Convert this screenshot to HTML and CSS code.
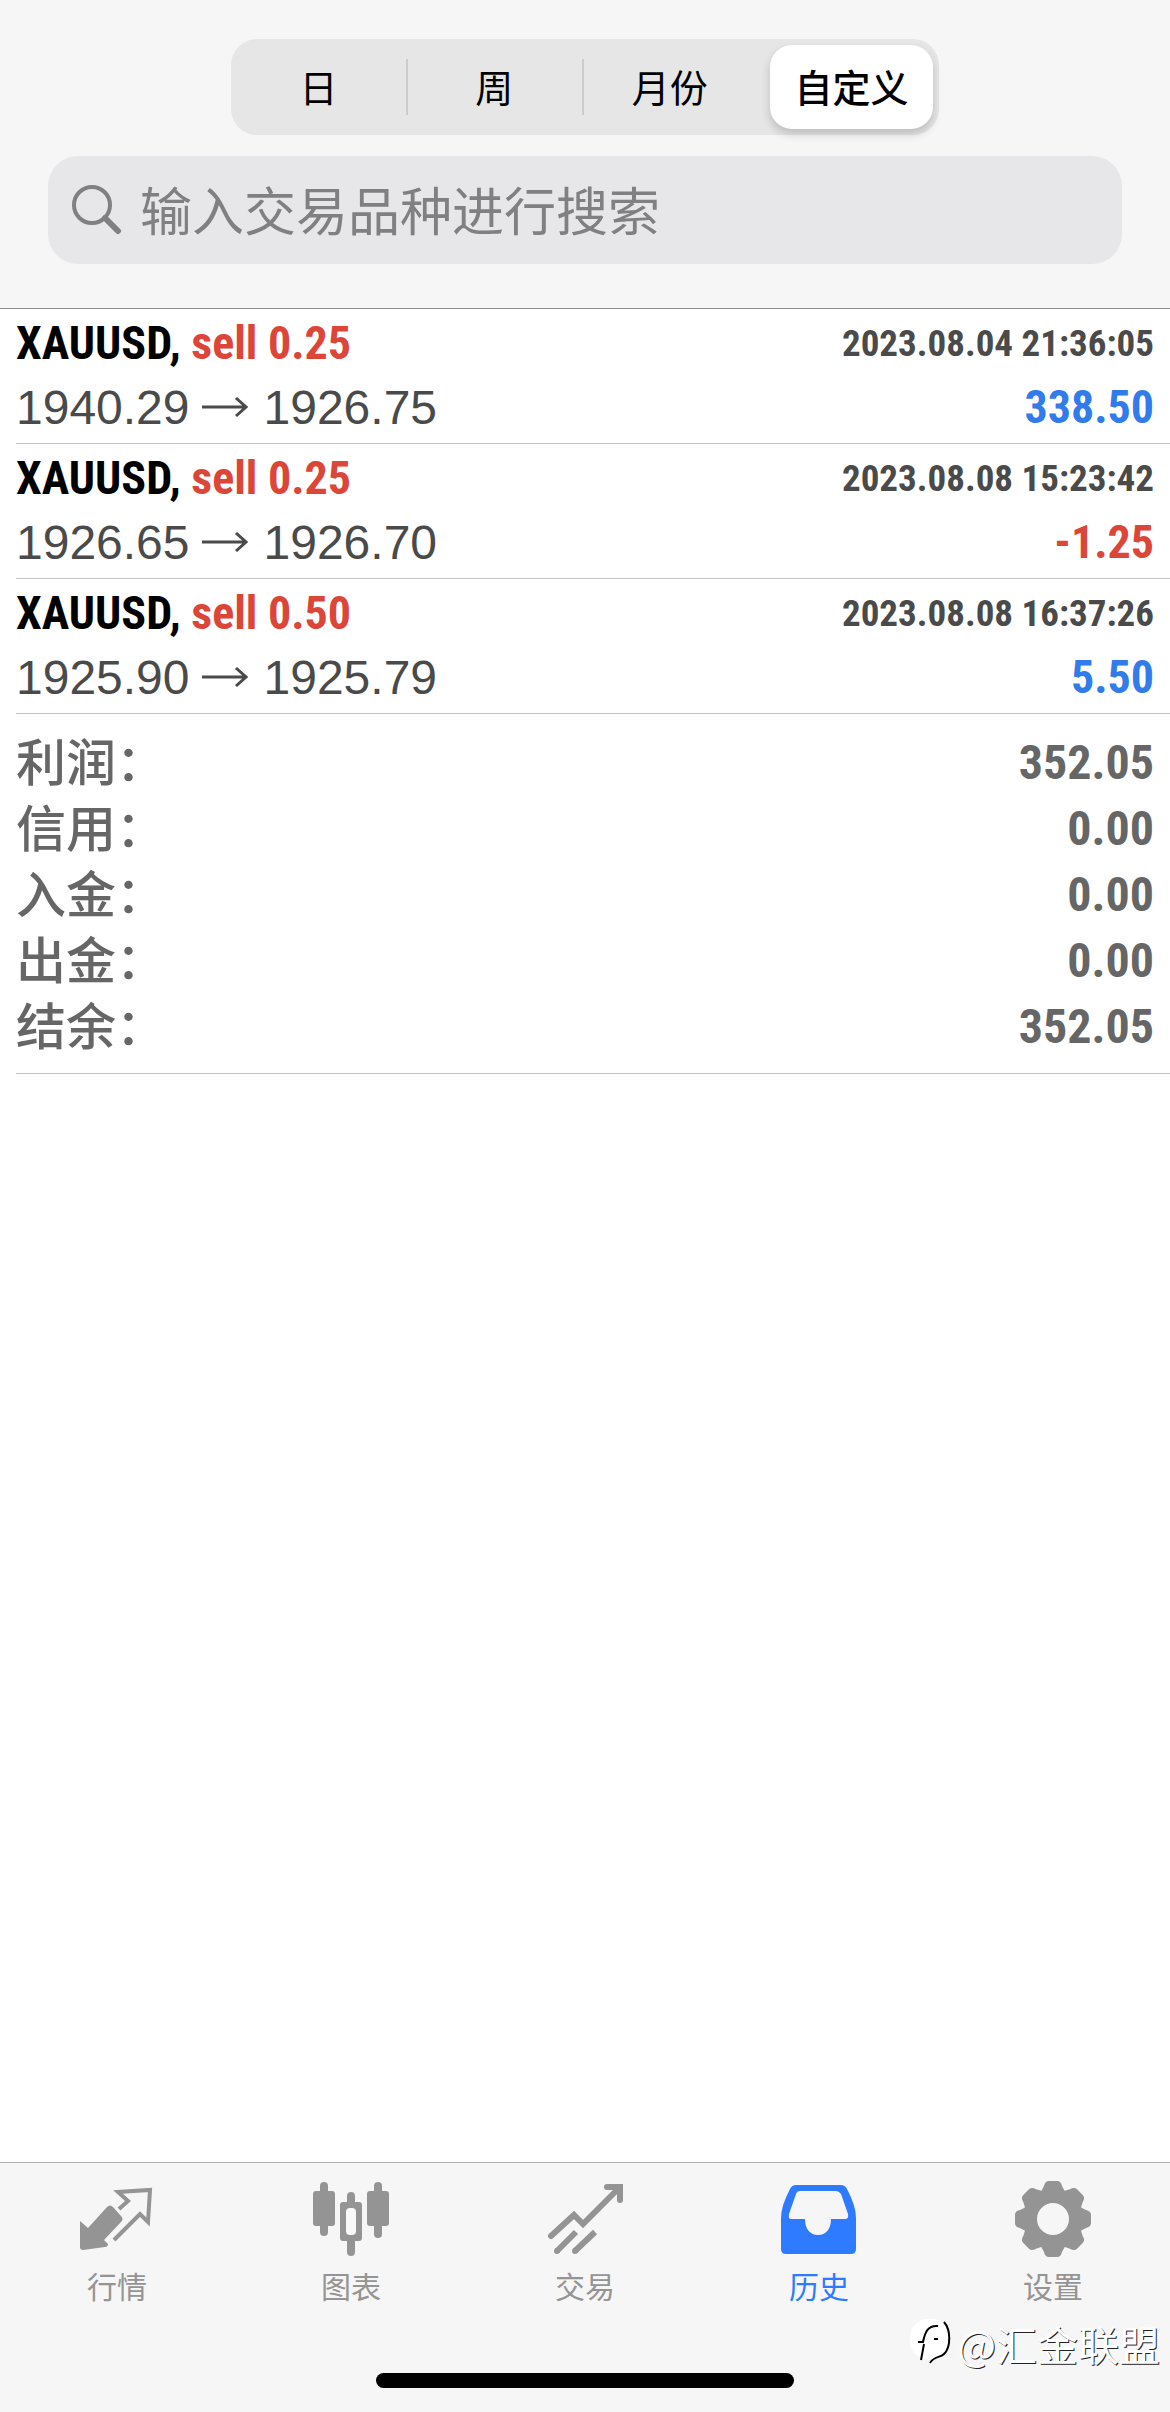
FILE: index.html
```html
<!DOCTYPE html>
<html lang="zh-CN">
<head>
<meta charset="utf-8">
<meta name="viewport" content="width=device-width, initial-scale=1">
<title>历史</title>
<link rel="stylesheet" href="styles.css">
</head>
<body>
<header class="header">
  <div class="segments" role="group" aria-label="时间范围">
    <button type="button" class="segment">日</button>
    <button type="button" class="segment segment-divided">周</button>
    <button type="button" class="segment segment-divided">月份</button>
    <button type="button" class="segment segment-active" aria-pressed="true">自定义</button>
  </div>
  <label class="search">
    <svg class="search-icon" viewBox="0 0 50 50" aria-hidden="true"><circle cx="20" cy="20" r="18"/><path d="M33 33L46 46" stroke-width="6"/></svg>
    <input class="search-input" type="search" placeholder="输入交易品种进行搜索" aria-label="输入交易品种进行搜索">
  </label>
</header>

<main class="history">
  <ul class="deals">
    <li class="deal">
      <div class="deal-line">
        <span class="symbol">XAUUSD, <span class="side">sell 0.25</span></span>
        <time class="time">2023.08.04 21:36:05</time>
      </div>
      <div class="deal-line">
        <span class="prices">1940.29<svg class="arrow" viewBox="0 0 46 22" role="img" aria-label="至"><path d="M0 11H44M34 2L44 11L34 20"/></svg>1926.75</span>
        <span class="amount profit">338.50</span>
      </div>
    </li>
    <li class="deal">
      <div class="deal-line">
        <span class="symbol">XAUUSD, <span class="side">sell 0.25</span></span>
        <time class="time">2023.08.08 15:23:42</time>
      </div>
      <div class="deal-line">
        <span class="prices">1926.65<svg class="arrow" viewBox="0 0 46 22" role="img" aria-label="至"><path d="M0 11H44M34 2L44 11L34 20"/></svg>1926.70</span>
        <span class="amount loss">-1.25</span>
      </div>
    </li>
    <li class="deal">
      <div class="deal-line">
        <span class="symbol">XAUUSD, <span class="side">sell 0.50</span></span>
        <time class="time">2023.08.08 16:37:26</time>
      </div>
      <div class="deal-line">
        <span class="prices">1925.90<svg class="arrow" viewBox="0 0 46 22" role="img" aria-label="至"><path d="M0 11H44M34 2L44 11L34 20"/></svg>1925.79</span>
        <span class="amount profit">5.50</span>
      </div>
    </li>
  </ul>
  <dl class="summary">
    <div class="total"><dt>利润：</dt><dd>352.05</dd></div>
    <div class="total"><dt>信用：</dt><dd>0.00</dd></div>
    <div class="total"><dt>入金：</dt><dd>0.00</dd></div>
    <div class="total"><dt>出金：</dt><dd>0.00</dd></div>
    <div class="total"><dt>结余：</dt><dd>352.05</dd></div>
  </dl>
</main>

<footer class="footer">
  <nav class="tabs" aria-label="主导航">
    <a class="tab" href="#quotes">
      <svg class="tab-icon" viewBox="0 0 76 76" aria-hidden="true"><path fill="currentColor" d="M1 40L9 47L28 26Q31 23 34 26L42 35Q45 38 42 41L25 59L29 63Q29 66 26 66L4 69Q1 69 1 66Z"/><path fill="none" stroke="currentColor" stroke-width="4" stroke-linejoin="miter" d="M40 28L49 20L39 11L71 9L69 41L61 33L35 59"/></svg>
      <span>行情</span>
    </a>
    <a class="tab" href="#charts">
      <svg class="tab-icon" viewBox="0 0 76 76" fill="currentColor" aria-hidden="true"><rect x="0" y="10" width="22" height="35" rx="3"/><rect x="7" y="1" width="8" height="54" rx="4"/><rect x="54" y="10" width="22" height="35" rx="3"/><rect x="61" y="1" width="8" height="56" rx="4"/><rect x="34" y="11" width="8" height="64" rx="4"/><rect x="27" y="21" width="22" height="39" rx="3"/><rect x="33" y="27" width="10" height="27" rx="4" fill="#f9f9f9"/></svg>
      <span>图表</span>
    </a>
    <a class="tab" href="#trade">
      <svg class="tab-icon" viewBox="0 0 76 76" fill="none" stroke="currentColor" stroke-width="6" stroke-linecap="round" aria-hidden="true"><path d="M4 55L27 34L36 43L71 8M60 6H73V19"/><path stroke-linecap="butt" d="M29 51L10 70M48 51L28 70"/><path d="M10 70h0M28 70h0"/></svg>
      <span>交易</span>
    </a>
    <a class="tab tab-active" href="#history" aria-current="page">
      <svg class="tab-icon" viewBox="0 -1 76 76" aria-hidden="true"><path fill="currentColor" fill-rule="evenodd" d="M15 3H60Q64 3 66 7Q75 24 75 36V67Q75 72 70 72H5Q0 72 0 67V36Q0 24 9 7Q11 3 15 3ZM19 9Q16 9 15 12L8 32Q7 37 10 37H24C24 47 29 53 37 53S50 47 50 37H64Q68 37 67 32L60 12Q58 9 55 9Z"/></svg>
      <span>历史</span>
    </a>
    <a class="tab" href="#settings">
      <svg class="tab-icon" viewBox="-38 -38 76 76" fill="currentColor" aria-hidden="true"><defs><path id="tooth" d="M-15 -24Q-11 -28 -9 -33Q-8 -38 -4 -38H4Q8 -38 9 -33Q11 -28 15 -24L0 -16Z"/></defs><circle r="23" fill="none" stroke="currentColor" stroke-width="14"/><use href="#tooth"/><use href="#tooth" transform="rotate(45)"/><use href="#tooth" transform="rotate(90)"/><use href="#tooth" transform="rotate(135)"/><use href="#tooth" transform="rotate(180)"/><use href="#tooth" transform="rotate(225)"/><use href="#tooth" transform="rotate(270)"/><use href="#tooth" transform="rotate(315)"/></svg>
      <span>设置</span>
    </a>
  </nav>
  <div class="home-indicator"></div>
  <div class="watermark">
    <svg class="watermark-logo" viewBox="0 0 44 50" aria-hidden="true"><rect x="1" y="1" width="40" height="40" rx="18" fill="#fff"/><path d="M12 42L15 26M9 24H14C16 14 19 7 29 8M25 21H29M35 4C42 12 42 29 35 36C31 40 25 38 21 45" fill="none" stroke="#000" stroke-width="2"/></svg>
    <span>@汇金联盟</span>
  </div>
</footer>
</body>
</html>
```
FILE: styles.css
```css
* { box-sizing: border-box; }

body {
  margin: 0;
  min-height: 100vh;
  display: flex;
  flex-direction: column;
  background: #fff;
  color: #4a4a4a;
  font-family: "Liberation Sans", "Noto Sans CJK SC", sans-serif;
}

.header {
  display: flex;
  flex-direction: column;
  align-items: center;
  gap: 21px;
  padding: 39px 48px 44px;
  background: #f6f6f6;
  border-bottom: 1px solid #8a8a8a;
}

.segments {
  display: grid;
  grid-template-columns: repeat(4, 1fr);
  width: 66%;
  height: 96px;
  padding: 6px 6px 6px 0;
  border-radius: 26px;
  background: #e6e6e6;
}

.segment {
  display: flex;
  align-items: center;
  justify-content: center;
  margin: 0;
  padding: 0 0 4px;
  border: 0;
  border-radius: 22px;
  background: transparent;
  color: #000;
  font: 400 38px "Noto Sans CJK SC", sans-serif;
}

.segment-divided {
  border-radius: 0;
  background: linear-gradient(#cdcdcd, #cdcdcd) left center / 2px 56px no-repeat;
}

.segment-active {
  margin-left: 12px;
  background: #fff;
  font-weight: 500;
  box-shadow: 0 5px 10px rgba(0, 0, 0, 0.18);
}

.search {
  display: flex;
  align-items: center;
  gap: 18px;
  width: 100%;
  height: 108px;
  padding: 0 24px;
  border-radius: 30px;
  background: #e7e7e9;
}

.search-icon {
  flex: none;
  width: 50px;
  height: 50px;
  fill: none;
  stroke: #808082;
  stroke-width: 4;
  stroke-linecap: round;
}

.search-input {
  flex: 1;
  min-width: 0;
  padding: 0 0 4px;
  border: 0;
  outline: 0;
  background: transparent;
  color: #000;
  font: 400 52px "Noto Sans CJK SC", sans-serif;
}

.search-input::placeholder { color: #808082; opacity: 1; }

.history { flex: 1; padding-left: 16px; }

.deals { margin: 0; padding: 0; list-style: none; }

.deal {
  height: 135px;
  padding: 2px 16px 0 0;
  border-bottom: 1px solid #c4c4c4;
}

.deal-line {
  display: flex;
  align-items: center;
  justify-content: space-between;
  height: 64px;
}

.symbol, .time, .amount, .total dd {
  font-family: "Roboto Condensed", "Liberation Sans Narrow", sans-serif;
  font-weight: 700;
}

.symbol, .amount { font-size: 46px; }
.symbol { color: #000; }
.side, .loss { color: #dc4638; }
.time { font-size: 37px; }
.prices { display: flex; align-items: center; font-size: 48px; }
.arrow { width: 46px; height: 22px; margin: 0 16px 0 12px; fill: none; stroke: #4a4a4a; stroke-width: 3; }
.profit { color: #327bea; }

.summary {
  margin: 0;
  padding: 15px 16px 14px 0;
  border-bottom: 1px solid #c4c4c4;
  color: #666;
}

.total { display: flex; justify-content: space-between; height: 66px; }
.total dt { font: 500 50px/60px "Noto Sans CJK SC", sans-serif; }
.total dd { margin: 0; font-size: 48px; line-height: 68px; }

.footer {
  position: relative;
  display: flex;
  flex-direction: column;
  align-items: center;
  justify-content: space-between;
  height: 250px;
  padding-bottom: 24px;
  border-top: 1px solid #b0b0b0;
  background: #f6f6f6;
}

.tabs { display: grid; grid-template-columns: repeat(5, 1fr); width: 100%; padding-top: 18px; }

.tab {
  display: flex;
  flex-direction: column;
  align-items: center;
  gap: 6px;
  color: #949494;
  font: 400 30px/44px "Noto Sans CJK SC", sans-serif;
  text-decoration: none;
}

.tab-active { color: #2f7bff; }
.tab-icon { width: 76px; height: 76px; }

.home-indicator { width: 418px; height: 15px; border-radius: 8px; background: #000; }

.watermark {
  position: absolute;
  right: 10px;
  bottom: 39px;
  display: flex;
  align-items: center;
  gap: 4px;
  color: #fff;
  font: 400 41px/60px "Noto Sans CJK SC", sans-serif;
  text-shadow: 1px 1px 0 #222;
}

.watermark-logo { width: 44px; height: 50px; }
```
